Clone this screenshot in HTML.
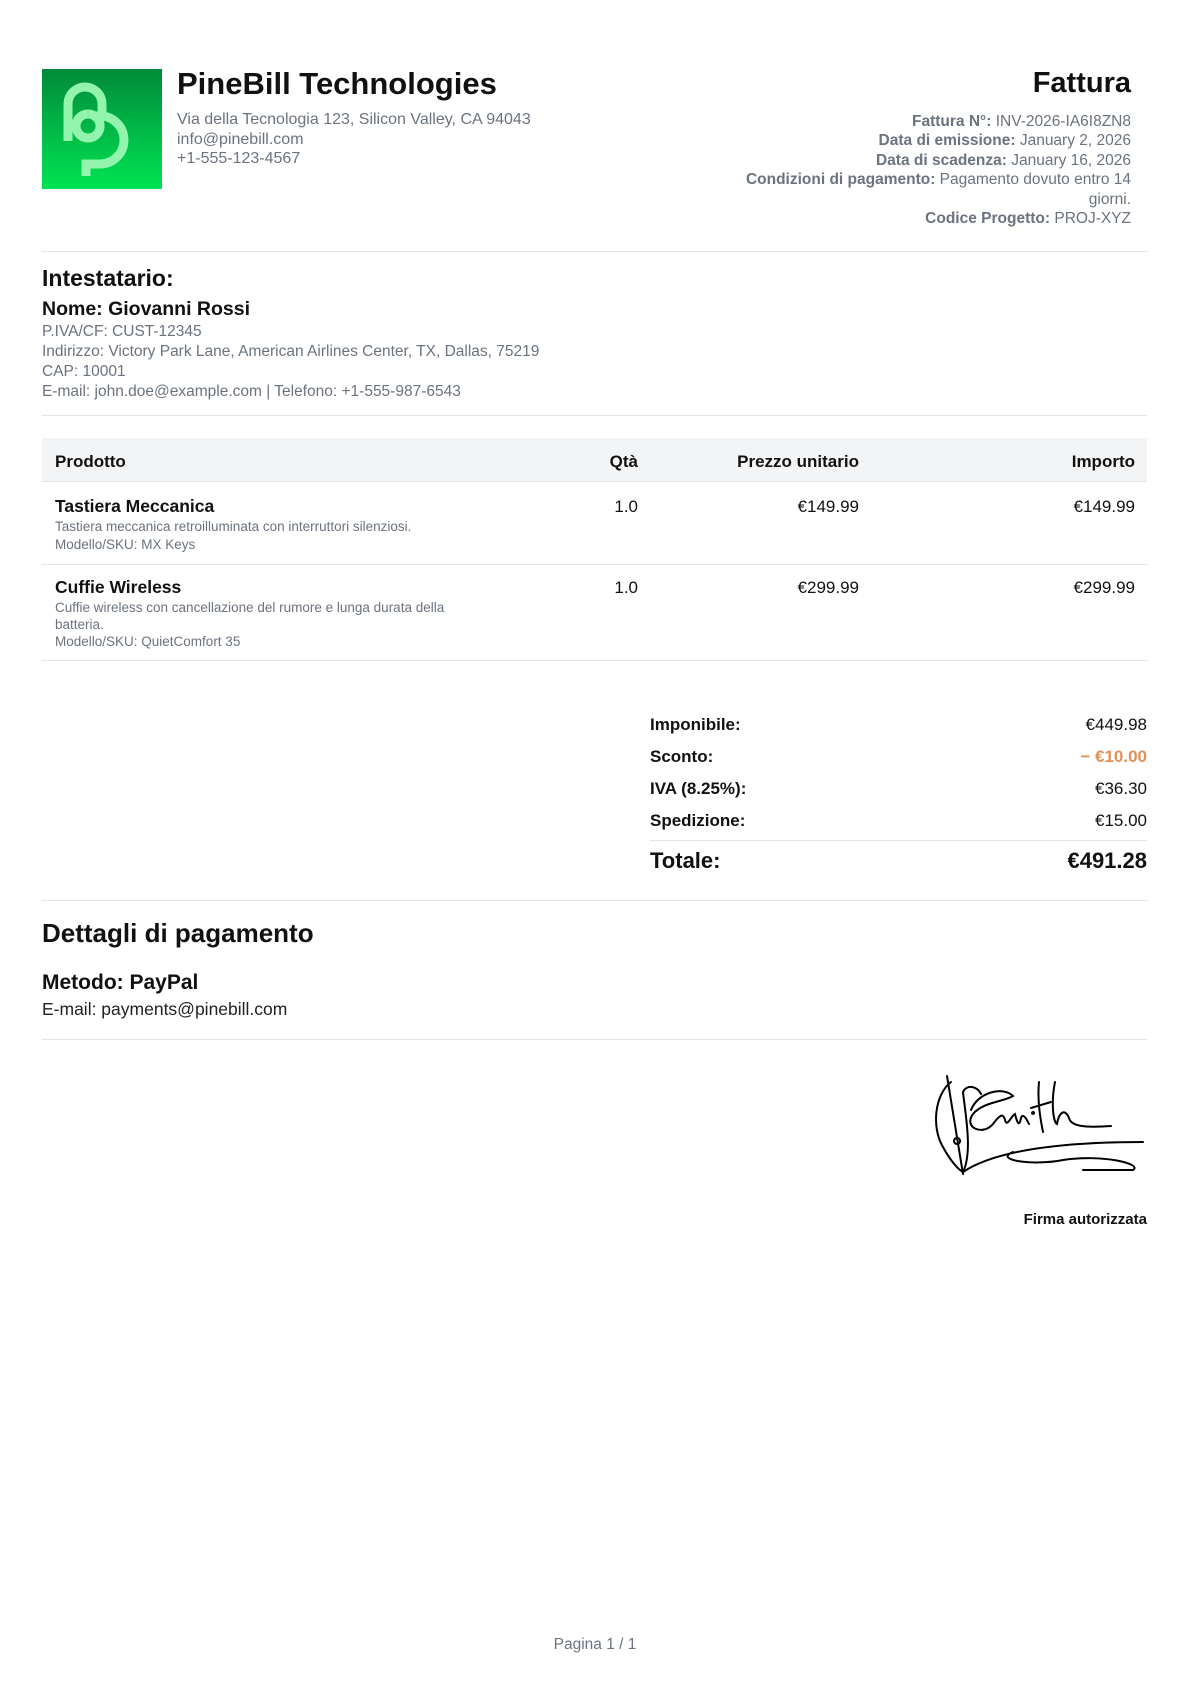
<!DOCTYPE html>
<html><head><meta charset="utf-8"><style>
*{margin:0;padding:0;box-sizing:border-box}
body{width:1190px;height:1683px;background:#fff;font-family:"Liberation Sans",Arial,sans-serif;color:#111;position:relative;overflow:hidden}
.a{position:absolute;white-space:nowrap}
.g{color:#6b7280}
.hr{position:absolute;left:42px;width:1105px;height:1px;background:#e2e4e8}
.r{text-align:right}
b{font-weight:bold}
</style></head><body>
<svg class="a" style="left:42px;top:69px" width="120" height="120" viewBox="0 0 120 120">
<defs><linearGradient id="lg" x1="0" y1="0" x2="0" y2="1"><stop offset="0" stop-color="#008a3a"/><stop offset="1" stop-color="#00e452"/></linearGradient></defs>
<rect width="120" height="120" fill="url(#lg)"/>
<path d="M26 72 V35 A17 17 0 0 1 60 35 V46 M46 45 A12 12 0 1 0 46.1 45 M50 47 H58 A24 24 0 0 1 58 95 H44 V107" fill="none" stroke="#93f5ad" stroke-width="9"/>
</svg>
<div class="a" style="left:177px;top:66px;font-size:31px;font-weight:bold">PineBill Technologies</div>
<div class="a g" style="left:177px;top:110px;font-size:16px;line-height:19.5px">Via della Tecnologia 123, Silicon Valley, CA 94043<br>info@pinebill.com<br>+1-555-123-4567</div>
<div class="a r" style="right:59px;top:67px;font-size:29px;font-weight:bold">Fattura</div>
<div class="a g r" style="right:59px;top:112px;font-size:15.5px;line-height:19.4px"><b>Fattura N°:</b> INV-2026-IA6I8ZN8<br><b>Data di emissione:</b> January 2, 2026<br><b>Data di scadenza:</b> January 16, 2026<br><b>Condizioni di pagamento:</b> Pagamento dovuto entro 14<br>giorni.<br><b>Codice Progetto:</b> PROJ-XYZ</div>
<div class="hr" style="top:251px"></div>
<div class="a" style="left:42px;top:265px;font-size:23px;font-weight:bold">Intestatario:</div>
<div class="a" style="left:42px;top:298px;font-size:19.5px;font-weight:bold">Nome: Giovanni Rossi</div>
<div class="a g" style="left:42px;top:322px;font-size:15.5px;line-height:20px">P.IVA/CF: CUST-12345<br>Indirizzo: Victory Park Lane, American Airlines Center, TX, Dallas, 75219<br>CAP: 10001<br>E-mail: john.doe@example.com | Telefono: +1-555-987-6543</div>
<div class="hr" style="top:415px"></div>
<div class="a" style="left:42px;top:438px;width:1105px;height:44px;background:#f3f4f6;border-bottom:1px solid #e2e4e8"></div>
<div class="a" style="left:55px;top:452px;font-size:17px;font-weight:bold">Prodotto</div>
<div class="a r" style="right:552px;top:452px;font-size:17px;font-weight:bold">Qtà</div>
<div class="a r" style="right:331px;top:452px;font-size:17px;font-weight:bold">Prezzo unitario</div>
<div class="a r" style="right:55px;top:452px;font-size:17px;font-weight:bold">Importo</div>
<div class="a" style="left:55px;top:496px;font-size:17.5px;font-weight:bold">Tastiera Meccanica</div>
<div class="a g" style="left:55px;top:518px;font-size:13.5px;line-height:18px">Tastiera meccanica retroilluminata con interruttori silenziosi.<br>Modello/SKU: MX Keys</div>
<div class="a r" style="right:552px;top:497px;font-size:17px">1.0</div>
<div class="a r" style="right:331px;top:497px;font-size:17px">€149.99</div>
<div class="a r" style="right:55px;top:497px;font-size:17px">€149.99</div>
<div class="hr" style="top:564px"></div>
<div class="a" style="left:55px;top:577px;font-size:17.5px;font-weight:bold">Cuffie Wireless</div>
<div class="a g" style="left:55px;top:599px;font-size:13.5px;line-height:17px">Cuffie wireless con cancellazione del rumore e lunga durata della<br>batteria.<br>Modello/SKU: QuietComfort 35</div>
<div class="a r" style="right:552px;top:578px;font-size:17px">1.0</div>
<div class="a r" style="right:331px;top:578px;font-size:17px">€299.99</div>
<div class="a r" style="right:55px;top:578px;font-size:17px">€299.99</div>
<div class="hr" style="top:660px"></div>
<div class="a" style="left:650px;top:709px;font-size:17px;font-weight:bold;line-height:32px">Imponibile:<br>Sconto:<br>IVA (8.25%):<br>Spedizione:</div>
<div class="a r" style="right:43px;top:709px;font-size:17px;line-height:32px">€449.98<br><span style="color:#e0905a;font-weight:bold">− €10.00</span><br>€36.30<br>€15.00</div>
<div class="a" style="left:650px;top:840px;width:497px;height:1px;background:#e2e4e8"></div>
<div class="a" style="left:650px;top:848px;font-size:22px;font-weight:bold">Totale:</div>
<div class="a r" style="right:43px;top:848px;font-size:22px;font-weight:bold">€491.28</div>
<div class="hr" style="top:900px"></div>
<div class="a" style="left:42px;top:918px;font-size:26px;font-weight:bold">Dettagli di pagamento</div>
<div class="a" style="left:42px;top:971px;font-size:21px;font-weight:bold">Metodo: PayPal</div>
<div class="a" style="left:42px;top:999px;font-size:17.5px;color:#222">E-mail: payments@pinebill.com</div>
<div class="hr" style="top:1039px"></div>
<svg class="a" style="left:933px;top:1072px" width="214" height="110" viewBox="0 0 214 110" fill="none" stroke="#000" stroke-width="2" stroke-linecap="round">
<path d="M14 4 L30 102"/>
<path d="M18 10 C2 22 -2 55 10 75 C18 90 26 98 30 100 C40 80 32 40 30 20 C34 12 44 14 48 22"/>
<path d="M24 66 a3 3 0 1 0 0.1 0"/>
<path d="M38 38 C45 20 70 14 80 24 C70 30 50 30 40 42 C30 56 50 64 60 52 C66 44 70 40 72 48 C74 56 78 44 82 42 C84 50 86 56 88 46 C90 40 94 48 96 52 M100 40 a1 1 0 1 0 0.1 0 M106 10 C104 30 108 50 110 60 M98 36 L118 30 M122 10 C118 30 120 50 124 52 C126 40 132 36 136 46 C138 54 150 56 178 54"/>
<path d="M30 100 C60 80 120 70 210 70"/>
<path d="M80 80 C60 88 100 94 130 88 C170 82 210 92 200 98 L150 98"/>
</svg>
<div class="a r" style="right:43px;top:1211px;font-size:15px;font-weight:bold">Firma autorizzata</div>
<div class="a g" style="left:0;width:1190px;text-align:center;top:1636px;font-size:15.5px">Pagina 1 / 1</div>
</body></html>
